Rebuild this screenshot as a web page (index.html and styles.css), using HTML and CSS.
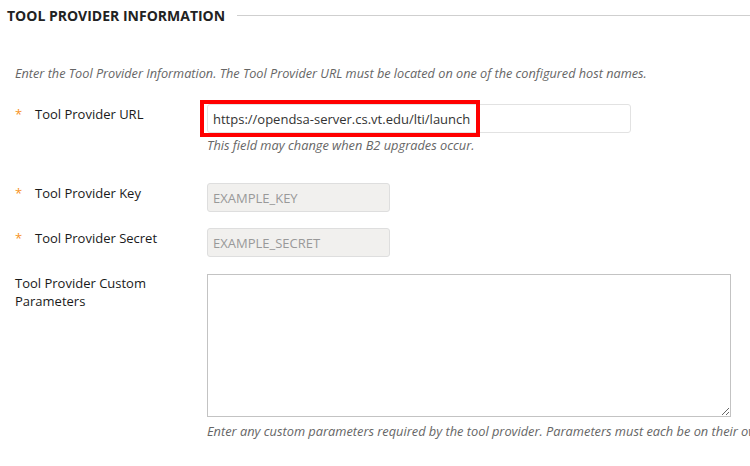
FILE: index.html
```html
<!DOCTYPE html>
<html>
<head>
<meta charset="utf-8">
<link rel="stylesheet" href="styles.css">
</head>
<body>
<div class="page">
  <div class="section-head">
    <h2 class="section-title">Tool Provider Information</h2>
    <div class="section-rule"></div>
  </div>
  <p class="intro">Enter the Tool Provider Information. The Tool Provider URL must be located on one of the configured host names.</p>

  <div class="row row-url">
    <div class="label"><span class="req">*</span><span>Tool Provider URL</span></div>
    <div class="field">
      <div class="input-wrap">
        <input class="text-input url-input" type="text" value="https://opendsa-server.cs.vt.edu/lti/launch">
        <div class="highlight"></div>
      </div>
      <p class="help">This field may change when B2 upgrades occur.</p>
    </div>
  </div>

  <div class="row row-key">
    <div class="label"><span class="req">*</span><span>Tool Provider Key</span></div>
    <div class="field">
      <input class="text-input ro-input" type="text" value="EXAMPLE_KEY" readonly>
    </div>
  </div>

  <div class="row row-secret">
    <div class="label"><span class="req">*</span><span>Tool Provider Secret</span></div>
    <div class="field">
      <input class="text-input ro-input" type="text" value="EXAMPLE_SECRET" readonly>
    </div>
  </div>

  <div class="row row-custom">
    <div class="label label-plain">Tool Provider Custom<br>Parameters</div>
    <div class="field">
      <textarea class="params"></textarea>
      <p class="help help-wide">Enter any custom parameters required by the tool provider. Parameters must each be on their own line.</p>
    </div>
  </div>
</div>
</body>
</html>
```

FILE: styles.css
```css
html, body {
  margin: 0;
  padding: 0;
  background: #fff;
}
.page {
  width: 750px;
  height: 466px;
  overflow: hidden;
  font-family: "Open Sans", "Liberation Sans", sans-serif;
  color: #222;
}
.section-head {
  display: flex;
  align-items: center;
  gap: 12px;
  padding: 6px 0 0 7px;
  height: 20px;
}
.section-title {
  margin: 0;
  font-size: 14px;
  font-weight: 700;
  line-height: 20px;
  text-transform: uppercase;
  color: #222;
  white-space: nowrap;
}
.section-rule {
  flex: 1;
  border-top: 1px solid #cfcfcf;
  margin-top: -2px;
}
.intro {
  margin: 38px 0 0 15px;
  font-size: 12.7px;
  line-height: 18px;
  font-style: italic;
  color: #666;
  white-space: nowrap;
}
.row {
  display: flex;
  align-items: flex-start;
}
.label {
  width: 207px;
  flex: none;
  padding-left: 15px;
  box-sizing: border-box;
  font-size: 13px;
  line-height: 18px;
  padding-top: 1px;
  color: #1a1a1a;
  display: flex;
}
.label-plain {
  display: block;
  padding-top: 0;
}
.req {
  width: 20px;
  color: #f7931e;
  font-size: 13px;
}
.field {
  flex: 1;
  min-width: 0;
}
.row-url { margin-top: 22px; }
.row-key { margin-top: 29px; }
.row-secret { margin-top: 16px; }
.row-custom { margin-top: 17px; }

.input-wrap {
  position: relative;
  width: 424px;
}
.text-input {
  display: block;
  height: 29px;
  box-sizing: border-box;
  border: 1px solid #e2e2e2;
  border-radius: 3px;
  padding: 0 5px;
  font-family: "Open Sans", "Liberation Sans", sans-serif;
  font-size: 13px;
  color: #333;
  background: #fff;
  outline: none;
  margin: 0;
}
.url-input {
  width: 424px;
}
.ro-input {
  width: 183px;
  background: #f1f0ee;
  border-color: #dedede;
  color: #999;
}
.highlight {
  position: absolute;
  left: -7px;
  top: -4px;
  width: 280px;
  height: 37px;
  box-sizing: border-box;
  border: 4px solid #f00;
  pointer-events: none;
}
.help {
  margin: 3px 0 0 0;
  font-size: 12.8px;
  line-height: 18px;
  font-style: italic;
  color: #666;
  white-space: nowrap;
}
.params {
  display: block;
  width: 524px;
  height: 143px;
  box-sizing: border-box;
  border: 1px solid #c3c3c3;
  border-radius: 0;
  margin: 0;
  padding: 4px;
  resize: both;
  font-family: "Open Sans", "Liberation Sans", sans-serif;
  font-size: 13px;
  outline: none;
}
.help-wide {
  margin-top: 5px;
}
```
